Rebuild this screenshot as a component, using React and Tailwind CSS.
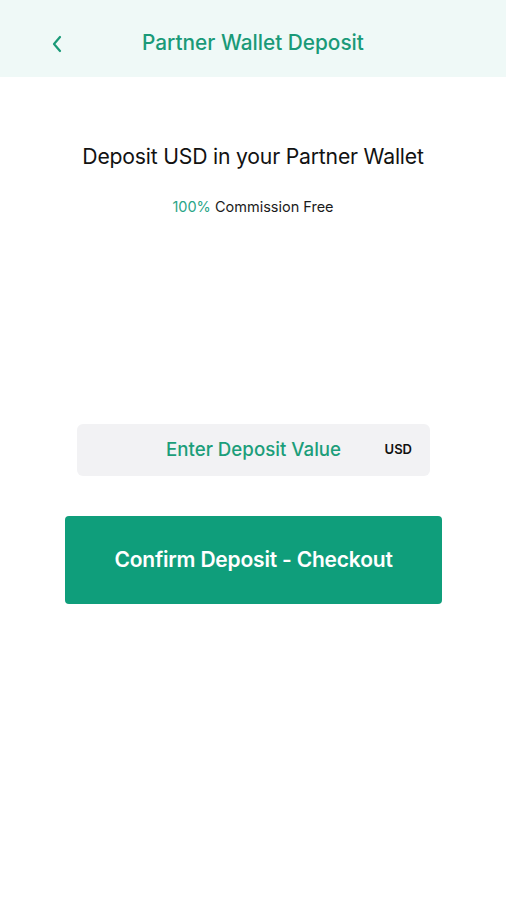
export default function App() {
  return (
    <div className="min-h-[900px] w-[506px] bg-white font-['Inter',sans-serif]">
      <div className="relative flex h-[77px] items-center justify-center bg-[#eff9f7]">
        <svg className="absolute left-[51px] top-[35px]" width="12" height="18" viewBox="0 0 12 18" fill="none">
          <path d="M9 2 L3 9 L9 16" stroke="#1a9a78" strokeWidth="2.2" strokeLinecap="round" strokeLinejoin="round" />
        </svg>
        <div className="mt-[9px] text-[20.8px] font-medium tracking-[0px] text-[#1a9a78]">Partner Wallet Deposit</div>
      </div>
      <div className="flex flex-col items-center">
        <div className="mt-[64px] text-[21.2px] tracking-[-0.2px] text-[#121212]">Deposit USD in your Partner Wallet</div>
        <div className="mt-[23px] text-[14.5px] text-[#1b1b1b]">
          <span className="text-[#2aa587]">100%</span> Commission Free
        </div>
      </div>
      <div className="mx-[77px] mt-[206px] flex h-[52px] w-[353px] items-center rounded-[6px] bg-[#f2f2f4]">
        <div className="flex-1 pl-[89px] text-[18.7px] font-medium text-[#1c9e7a]">Enter Deposit Value</div>
        <div className="pr-[18px] text-[13px] font-semibold text-[#111]">USD</div>
      </div>
      <div className="mx-[65px] mt-[40px] flex h-[88px] w-[377px] items-center justify-center rounded-[4px] bg-[#0f9e7b] text-[21px] font-semibold tracking-[-0.2px] text-white">
        Confirm Deposit - Checkout
      </div>
    </div>
  );
}
